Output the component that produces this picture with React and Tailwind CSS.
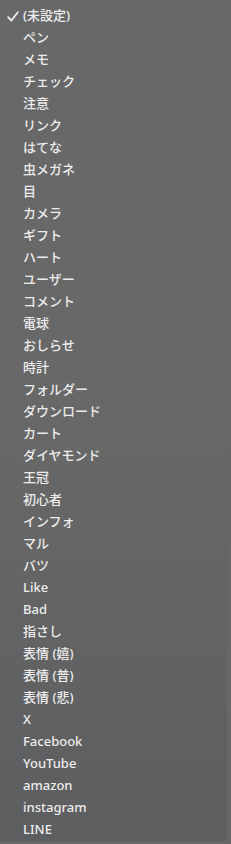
const ITEMS = [
  'ペン', 'メモ', 'チェック', '注意', 'リンク', 'はてな', '虫メガネ', '目', 'カメラ', 'ギフト',
  'ハート', 'ユーザー', 'コメント', '電球', 'おしらせ', '時計', 'フォルダー', 'ダウンロード', 'カート',
  'ダイヤモンド', '王冠', '初心者', 'インフォ', 'マル', 'バツ', 'Like', 'Bad', '指さし',
  '表情 (嬉)', '表情 (普)', '表情 (悲)', 'X', 'Facebook', 'YouTube', 'amazon', 'instagram', 'LINE',
];

export default function App() {
  return (
    <div className="w-[231px] h-[844px] bg-[#666767]">
      <div
        className="w-[227px] h-[841px] bg-gradient-to-b from-[#686868] via-[#686868] to-[#5d5e60] pt-[5px] text-[13px] font-medium text-[#ececec]"
        style={{ fontFamily: '"Noto Sans", "Noto Sans CJK JP", sans-serif' }}
      >
        <div className="h-[22px] flex items-center">
          <span className="w-[23px] pl-[7px] flex items-center">
            <svg width="12" height="11" viewBox="0 0 12 11" fill="none">
              <path d="M1.2 6.2 L4.3 9.6 L10.8 1.2" stroke="#ececec" strokeWidth="1.8" strokeLinecap="round" strokeLinejoin="round" />
            </svg>
          </span>
          <span>(未設定)</span>
        </div>
        {ITEMS.map(label => (
          <div key={label} className="h-[22px] flex items-center pl-[23px]">
            {label}
          </div>
        ))}
      </div>
    </div>
  );
}
